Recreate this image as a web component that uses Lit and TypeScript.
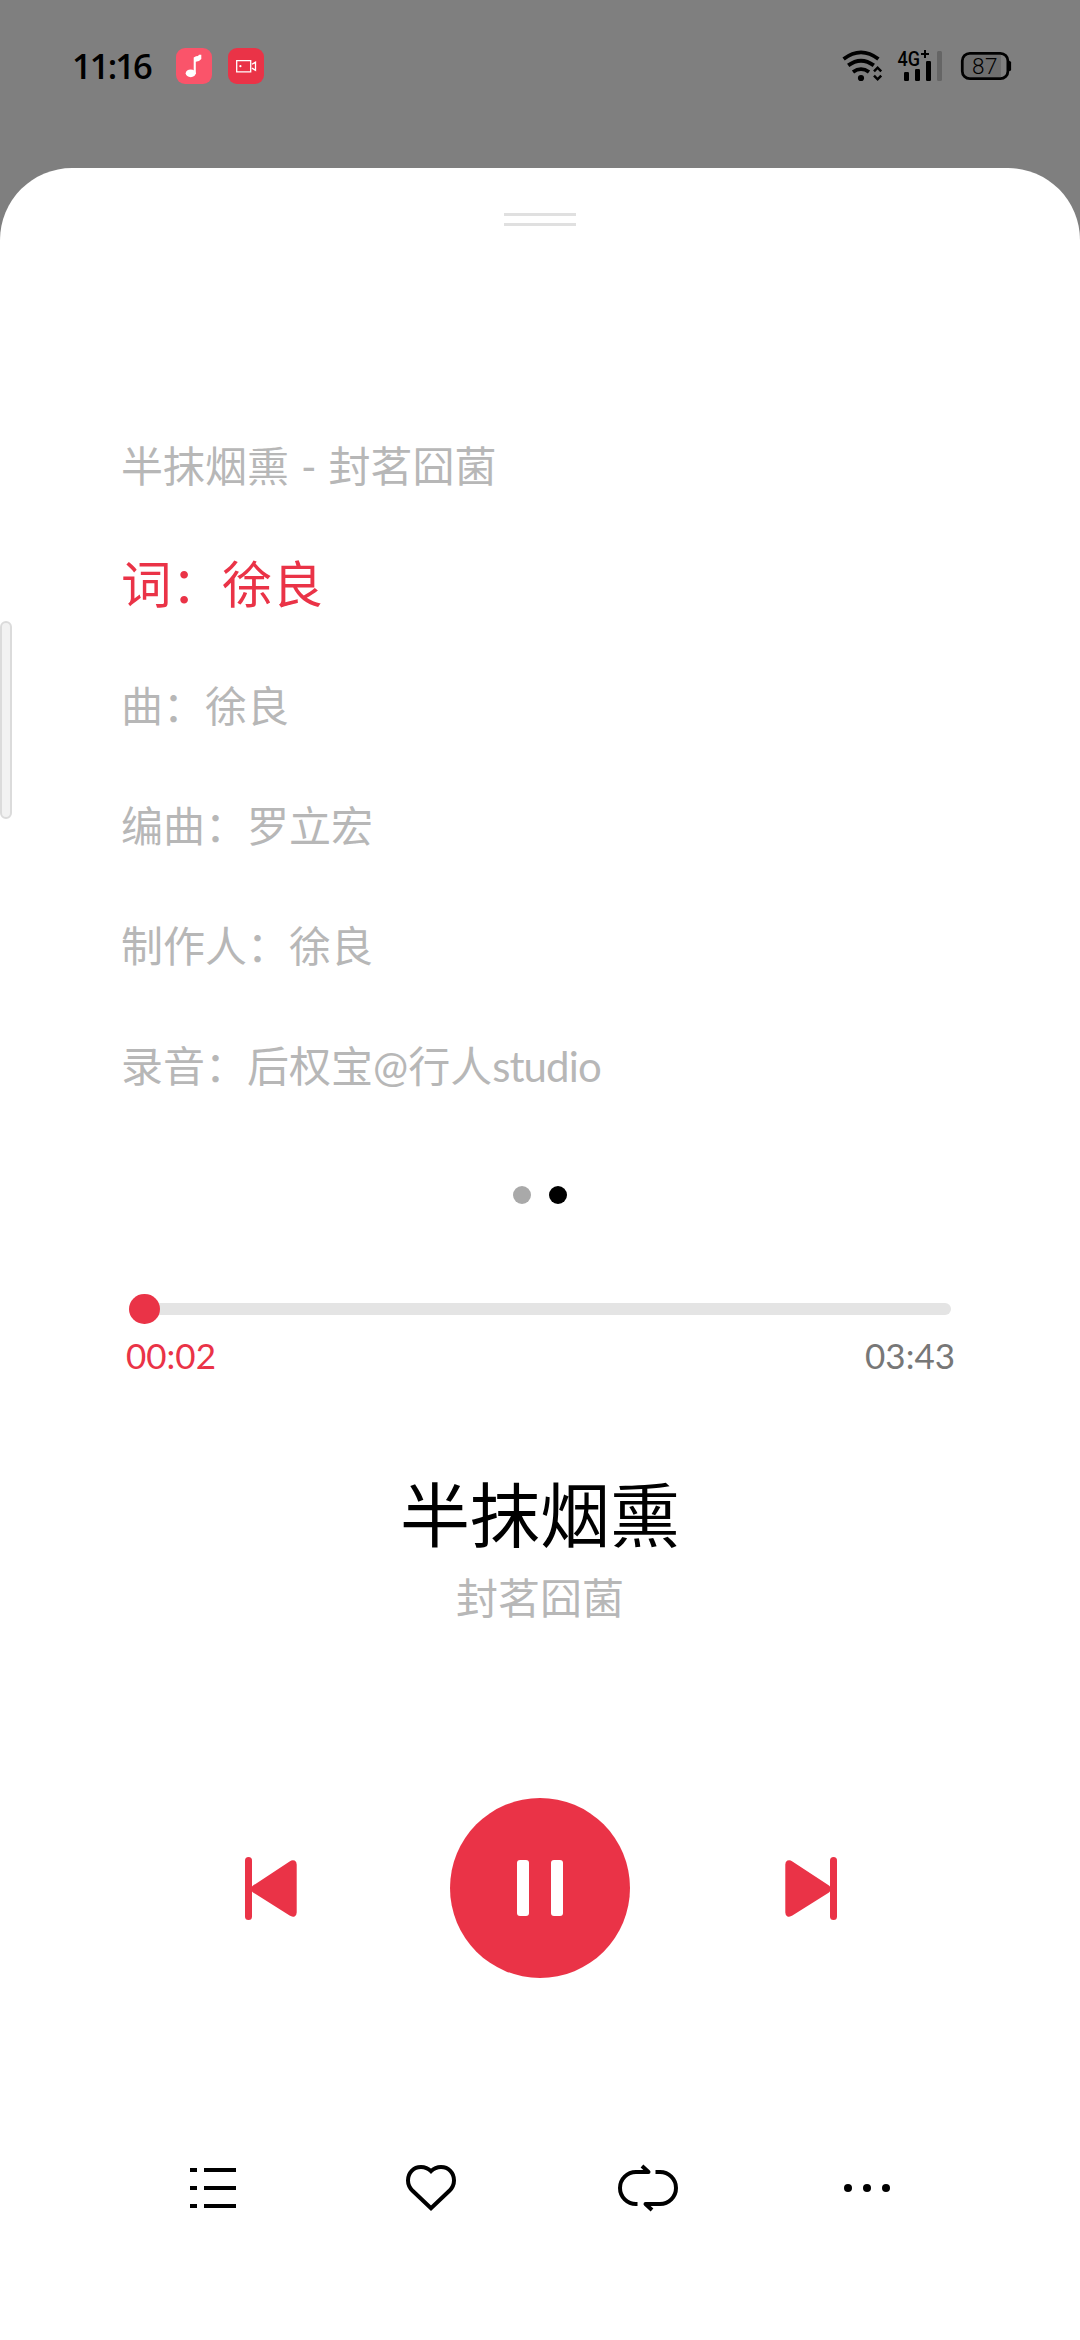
import { LitElement, html, css, svg } from "lit";
import { customElement, property, state } from "lit/decorators.js";
import { classMap } from "lit/directives/class-map.js";

const RED = "#ea3347";

@customElement("status-bar")
class StatusBar extends LitElement {
  static styles = css`
    :host {
      display: flex;
      justify-content: space-between;
      height: 168px;
      box-sizing: border-box;
      padding: 48px 68px 0 72px;
      color: #000;
    }
    .side {
      display: flex;
      height: 36px;
      align-items: center;
    }
    .clock {
      width: 104px;
      font: 600 34.5px/36px "Open Sans", sans-serif;
      letter-spacing: -1.9px;
      white-space: nowrap;
    }
    .app {
      display: block;
      width: 36px;
      height: 36px;
      margin-right: 16px;
    }
    svg {
      display: block;
    }
    .net {
      font: 500 20.5px "Roboto", sans-serif;
    }
    .level {
      font: 300 22.5px "Roboto", sans-serif;
    }
  `;

  render() {
    return html`
      <div class="side">
        <span class="clock">11:16</span>
        <svg class="app" viewBox="0 0 36 36">
          <rect width="36" height="36" rx="9" fill="#fa546a" />
          <ellipse cx="14.7" cy="25.3" rx="5" ry="3.9" fill="#fff" />
          <path d="M17.7 26V9.6L20 8.2l2-.2 1-1.2h2.3V11l-2.3 2-3.2.7V26z" fill="#fff" />
        </svg>
        <svg class="app" viewBox="0 0 36 36">
          <rect width="36" height="36" rx="9" fill=${RED} />
          <path d="M8.7 12.6h14v11.2h-14zM24 16.3l3.5-2.2v8.2L24 20.1" fill="none" stroke="#fff" stroke-width="1.3" />
          <circle cx="12.4" cy="18.2" r="1.1" fill="#fff" />
        </svg>
      </div>
      <div class="side">
        <svg width="172" height="36" viewBox="840 48 172 36">
          <g fill="none" stroke="#000" stroke-width="3.8">
            <path d="M843.6 59Q861 45.8 878.4 59" />
            <path d="M848.2 65.4Q861 56 873.8 65.4" />
            <path d="M853 72Q861 66.200 869 72" />
          </g>
          <circle cx="861" cy="78" r="3.1" />
          <path d="M874 71.3l3.6-3.6 3.6 3.600M874 75.700l3.600 3.600 3.600-3.600" fill="none" stroke="#000" stroke-width="2.5" />
          <text class="net" x="897.5" y="65.8" textLength="22.5" lengthAdjust="spacingAndGlyphs">4G</text>
          <path d="M921 54h8M925 50v8" stroke="#000" stroke-width="2" />
          <rect x="904" y="72" width="5" height="9" rx="1.2" />
          <rect x="915" y="69" width="5" height="12" rx="1.2" />
          <rect x="926" y="61" width="5" height="20" rx="1.2" />
          <rect x="937" y="51" width="5" height="30" rx="1.5" fill="#656565" />
          <path d="M1001 55v22h-31q-6 0-6-6V61q0-6 6-6z" fill="#6e6e6e" />
          <rect x="962.3" y="53.3" width="45.6" height="25.4" rx="7.5" fill="none" stroke="#000" stroke-width="2.8" />
          <rect x="1007.5" y="61" width="3.6" height="10" rx="1.6" />
          <text class="level" x="972" y="74" textLength="25.5">87</text>
        </svg>
      </div>
    `;
  }
}

@customElement("lyric-list")
class LyricList extends LitElement {
  @property({ attribute: false }) lines: string[] = [];
  @property({ type: Number }) active = 0;

  static styles = css`
    :host {
      display: flex;
      flex-direction: column;
      padding-left: 121px;
      font-family: "Lato", "Noto Sans CJK SC", sans-serif;
      color: #b7b7b7;
    }
    .line {
      height: 120px;
      font-size: 42px;
      line-height: 120px;
      white-space: pre;
    }
    .latin {
      letter-spacing: -0.9px;
    }
    .first {
      word-spacing: 1.2px;
    }
    .active {
      font-size: 50.5px;
      line-height: 116px;
      color: #ea3347;
    }
  `;

  /* Latin words are set slightly tighter than the Chinese text around them. */
  private runs(line: string) {
    return line
      .split(/([a-z]+)/)
      .map((run) => (/^[a-z]/.test(run) ? html`<span class="latin">${run}</span>` : run));
  }

  render() {
    return this.lines.map(
      (line, i) => html`
        <div class=${classMap({ line: true, first: i === 0, active: i === this.active })}>${this.runs(line)}</div>
      `
    );
  }
}

@customElement("seek-bar")
class SeekBar extends LitElement {
  @property({ type: Number }) progress = 0;
  @property() elapsed = "";
  @property() total = "";

  static styles = css`
    :host {
      display: block;
      padding: 0 129px;
    }
    .rail {
      display: flex;
      align-items: center;
      height: 30px;
    }
    .track {
      display: flex;
      align-items: center;
      width: 100%;
      height: 12px;
      border-radius: 6px;
      background: #e4e4e4;
    }
    .thumb {
      width: 30.5px;
      height: 30px;
      flex: none;
      border-radius: 50%;
      background: #ea3347;
    }
    .times {
      display: flex;
      justify-content: space-between;
      margin: 10px -4px 1px -3px;
      font: 400 35px/42px "Lato", sans-serif;
      color: #777;
    }
    .elapsed {
      color: #ea3347;
    }
  `;

  render() {
    return html`
      <div class="rail">
        <div class="track">
          <div class="thumb" style="margin-left:${this.progress}%"></div>
        </div>
      </div>
      <div class="times"><span class="elapsed">${this.elapsed}</span><span>${this.total}</span></div>
    `;
  }
}

@customElement("app-root")
class AppRoot extends LitElement {
  @state() private page = 1;

  private lines = [
    "半抹烟熏 - 封茗囧菌",
    "词：徐良",
    "曲：徐良",
    "编曲：罗立宏",
    "制作人：徐良",
    "录音：后权宝@行人studio",
  ];

  static styles = css`
    :host {
      display: block;
      position: relative;
      width: 1080px;
      height: 2340px;
      overflow: hidden;
      background: #7f7f7f;
      font-family: "Lato", "Noto Sans CJK SC", sans-serif;
    }
    .sheet {
      display: flex;
      flex-direction: column;
      box-sizing: border-box;
      height: 2172px;
      padding-top: 45px;
      border-radius: 72px 72px 0 0;
      background: #fff;
    }
    .grip {
      align-self: center;
      width: 72px;
      height: 7px;
      border-top: 3px solid #e0e0e0;
      border-bottom: 3px solid #e0e0e0;
      margin-bottom: 180px;
    }
    .edge {
      position: absolute;
      left: 0;
      top: 621px;
      width: 12px;
      height: 198px;
      box-sizing: border-box;
      border: 2px solid #dbdbdb;
      border-radius: 6px;
      background: #f2f2f2;
    }
    .dots {
      display: flex;
      justify-content: center;
      gap: 18px;
      margin: 60px 0 90px;
    }
    .dot {
      width: 18px;
      height: 18px;
      border-radius: 50%;
      background: #a9a9a9;
    }
    .on {
      background: #000;
    }
    .title {
      margin-top: 88px;
      text-align: center;
      font-size: 70px;
      line-height: 100px;
      color: #000;
    }
    .artist {
      margin-top: 3px;
      text-align: center;
      font-size: 42px;
      line-height: 60px;
      color: #b7b7b7;
    }
    .controls {
      display: grid;
      grid-template-columns: 52px 180px 52px;
      column-gap: 153px;
      justify-content: center;
      align-items: center;
      height: 180px;
      margin-top: 170px;
    }
    .next {
      margin-left: 2px;
    }
    .tools {
      display: grid;
      grid-template-columns: repeat(4, 218px);
      justify-items: center;
      margin: 174px 0 0 104px;
    }
    svg {
      display: block;
    }
  `;

  private skip(forward: boolean) {
    const glyph = svg`
      <rect x="0" y="1" width="7" height="63" rx="3.5" />
      <path d="M8 29.6L44.6 5.4Q47.2 3.7 49.6 4.6 51.7 5.6 51.7 8.4V56.6Q51.7 59.4 49.6 60.4 47.2 61.3 44.6 59.6L8 36.4Q3.6 33 8 29.6z" />
    `;
    return html`
      <svg class=${classMap({ next: forward })} width="52" height="65" viewBox="0 0 52 65" fill=${RED}>
        <g transform=${forward ? "translate(52 0) scale(-1 1)" : "scale(1)"}>${glyph}</g>
      </svg>
    `;
  }

  render() {
    return html`
      <status-bar></status-bar>
      <div class="sheet">
        <div class="grip"></div>
        <lyric-list .lines=${this.lines} active="1"></lyric-list>
        <div class="dots">
          ${[0, 1].map((i) => html`<span class=${classMap({ dot: true, on: i === this.page })}></span>`)}
        </div>
        <seek-bar progress="0" elapsed="00:02" total="03:43"></seek-bar>
        <div class="title">半抹烟熏</div>
        <div class="artist">封茗囧菌</div>
        <div class="controls">
          ${this.skip(false)}
          <svg width="180" height="180" viewBox="0 0 180 180">
            <circle cx="90" cy="90" r="90" fill=${RED} />
            <rect x="67" y="62" width="12" height="56" rx="3" fill="#fff" />
            <rect x="101" y="62" width="12" height="56" rx="3" fill="#fff" />
          </svg>
          ${this.skip(true)}
        </div>
        <div class="tools">
          <svg width="72" height="72" viewBox="0 0 72 72">
            <path d="M13 18h7M27 18h32M13 36h7M27 36h32M13 54h7M27 54h32" stroke="#000" stroke-width="4" />
          </svg>
          <svg width="72" height="72" viewBox="0 0 72 72">
            <path
              d="M36 19.2C33.2 16.4 30 15 26 15 18.5 15 13 20.8 13 28.4c0 4.2 1.8 7.6 4.6 10.4L36 56.2 54.4 38.8C57.2 36 59 32.6 59 28.4 59 20.8 53.5 15 46 15c-4 0-7.2 1.4-10 4.2z"
              fill="none" stroke="#000" stroke-width="4" stroke-linejoin="miter" />
          </svg>
          <svg width="72" height="72" viewBox="0 0 72 72">
            <g fill="none" stroke="#000" stroke-width="4" stroke-linejoin="round" stroke-linecap="butt">
              <path d="M24.500 52H23A16 16 0 0 1 23 20h12.500l-6.500-6" />
              <path d="M42.500 20H47A16 16 0 0 1 47 52H32.500l6.500 6" />
            </g>
          </svg>
          <svg width="72" height="72" viewBox="0 0 72 72">
            <circle cx="17" cy="36" r="4" />
            <circle cx="36" cy="36" r="4" />
            <circle cx="55" cy="36" r="4" />
          </svg>
        </div>
      </div>
      <div class="edge"></div>
    `;
  }
}
